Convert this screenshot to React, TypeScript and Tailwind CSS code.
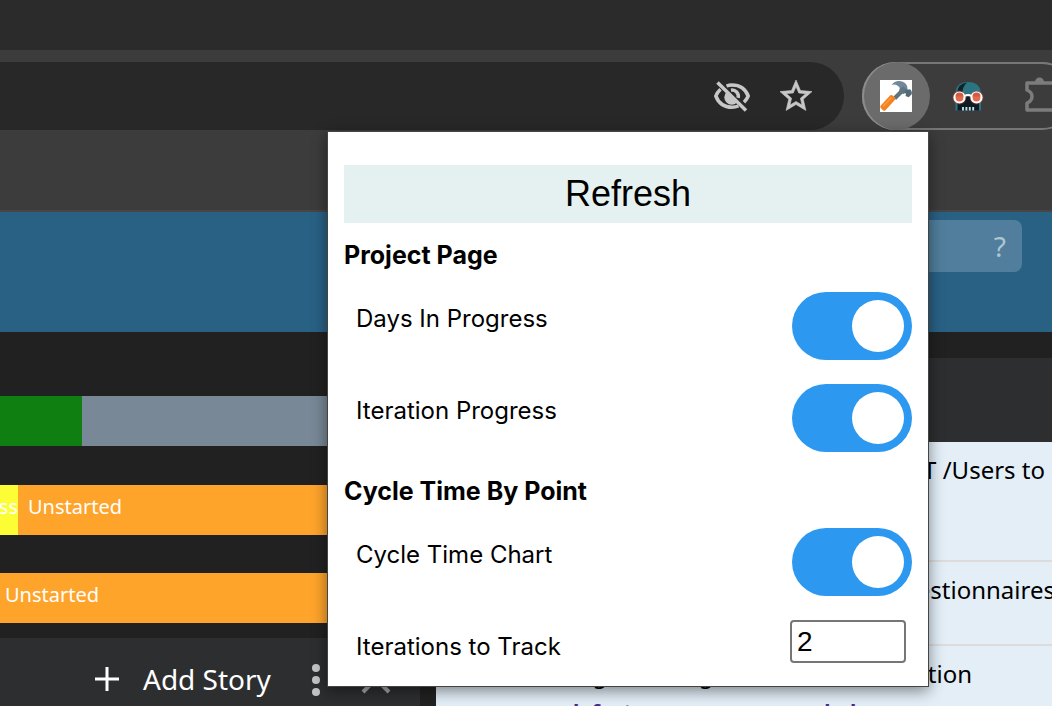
import React from "react";

function Toggle({ id, label }: { id: string; label: string }) {
  return (
    <div className="flex h-17 items-start justify-between pl-3">
      <label htmlFor={id} className="pt-[11px] text-2xl leading-8">
        {label}
      </label>
      <span className="relative block h-17 w-30">
        <input
          id={id}
          type="checkbox"
          role="switch"
          defaultChecked
          className="peer h-17 w-30 cursor-pointer appearance-none rounded-full bg-[#ccc] checked:bg-[#2c98f0]"
        />
        <span className="pointer-events-none absolute top-2 left-2 size-13 rounded-full bg-white peer-checked:left-15" />
      </span>
    </div>
  );
}

function Popup() {
  return (
    <section className="absolute top-[131px] right-[123px] z-10 w-[602px] border border-[#444] bg-white px-4 pt-[33px] pb-[23px] font-['Inter',sans-serif] text-black shadow-[0_4px_14px_rgba(0,0,0,0.45)]">
      <button className="h-[58px] w-full bg-[#e5f1f1] font-['Liberation_Sans',sans-serif] text-4xl leading-[58px]">
        Refresh
      </button>
      <h2 className="mt-4 mb-[21px] text-[25px] leading-8 font-bold">Project Page</h2>
      <div className="flex flex-col gap-6">
        <Toggle id="days" label="Days In Progress" />
        <Toggle id="iteration" label="Iteration Progress" />
      </div>
      <h2 className="mt-[23px] mb-[21px] text-[25px] leading-8 font-bold">Cycle Time By Point</h2>
      <Toggle id="chart" label="Cycle Time Chart" />
      <div className="mt-6 flex items-start justify-between pr-[6px] pl-3">
        <label htmlFor="track" className="pt-[11px] text-2xl leading-8">
          Iterations to Track
        </label>
        <input
          id="track"
          type="text"
          defaultValue="2"
          className="h-[43px] w-29 rounded border-2 border-[#767676] bg-white px-[5px] font-['Liberation_Sans',sans-serif] text-[28px] leading-[39px]"
        />
      </div>
    </section>
  );
}

function HammerIcon() {
  return (
    <svg viewBox="0 0 32 32" className="size-8">
      <rect width="32" height="32" fill="#fff" />
      <path d="M13.500 16.500 20.500 9.500 23.500 12.500 16 20Z" fill="#5d7380" />
      <path d="M.8 25.500 10.300 15.300Q11.500 14.500 12.700 15.500L15 17.800Q15.800 19 14.800 20L5.500 30.200Q4.300 31.300 3 30.200L.8 28Q-.3 26.800.8 25.500Z" fill="#f58220" />
      <path d="m3 26.500 8.500-9" stroke="#ff9d38" strokeWidth="1.500" />
      <path d="M11.500 4.800Q14.500.8 19.500 1 25 1.300 27.200 6.200L27.600 10 22.800 13 19 10.500 19.800 8Q17 3.300 11.500 4.800Z" fill="#71879a" />
      <path d="M20 9 23 6.500 27.600 9.500 24 14 20 13Z" fill="#607783" />
      <path d="m26 10 4-.8Q32.500 11 31.700 14.300L28.700 17.300 25.500 16 26 13.800 24 12.500Z" fill="#546b77" />
    </svg>
  );
}

function SkullIcon() {
  return (
    <svg viewBox="0 0 32 32" className="size-8">
      <path d="M3.500 30.500V14Q3.500 2 16 2T29 14V30.500Z" fill="#2b7482" />
      <path d="M5.500 13Q5 4 15 2.500 10 7 10.500 14Z" fill="#10232a" />
      <path d="M5.500 20 12 16.500H20.500L27 20V30.500H5.500Z" fill="#101b24" />
      <path d="M11 27v3.500m3.400-3.500v3.500m3.400-3.500v3.500m3.400-3.500v3.500" stroke="#b9e4e8" strokeWidth="1.900" />
      <circle cx="7.500" cy="17.500" r="7" fill="#e8593f" opacity="0.35" />
      <circle cx="24.500" cy="17.500" r="7" fill="#e8593f" opacity="0.35" />
      <circle cx="7.500" cy="17.500" r="5" fill="#e56a4f" stroke="#fff" strokeWidth="2.200" />
      <circle cx="24.500" cy="17.500" r="5" fill="#e56a4f" stroke="#fff" strokeWidth="2.200" />
      <path d="M3.500 16.500a4 4 0 0 1 8 0ZM20.500 16.500a4 4 0 0 1 8 0Z" fill="#cf5a45" />
      <path d="M12.500 16q3.500-2 7 0" stroke="#fff" strokeWidth="2" fill="none" />
    </svg>
  );
}

function BrowserChrome() {
  return (
    <header className="bg-[#3c3c3c]">
      <div className="h-[50px] bg-[#2b2b2b]" />
      <div className="flex h-20 items-center overflow-hidden pt-3">
        <div className="flex h-17 flex-1 items-center justify-end gap-[26px] rounded-r-full bg-[#282828] pr-[30px]">
          <button aria-label="Third-party cookies blocked">
            <svg viewBox="0 0 40 40" className="size-10" fill="none" stroke="#c7c7c7" strokeWidth="3.500">
              <path d="M14.500 10Q17 9 20 9C27.500 9 33.500 13 36.200 20Q34.700 23.700 32 26.300M26.500 30Q23.500 31.200 20 31.200C12.500 31.200 6.500 27 3.800 20Q5.200 16.300 8.500 13.200" />
              <path d="M19 14.200A6.300 6.300 0 0 1 26.200 21.800" />
              <path d="m5.500 6.500 28.500 28" />
              <path d="m14.500 16 10.500 10.500A7 7 0 0 1 14.500 16Z" fill="#c7c7c7" stroke="none" />
            </svg>
          </button>
          <button aria-label="Bookmark this page">
            <svg viewBox="2 2 20 20" className="m-0.5 size-8" fill="#c7c7c7">
              <path
                d="m22 9.240-7.190-.62L12 2 9.190 8.630 2 9.240l5.460 4.730L5.820 21 12 17.270 18.180 21l-1.630-7.030L22 9.240zM12 15.400l-3.760 2.270 1-4.280-3.320-2.880 4.380-.38L12 6.100l1.710 4.040 4.380.38-3.320 2.880 1 4.280L12 15.400z"
                stroke="#c7c7c7"
                strokeWidth="0.400"
              />
            </svg>
          </button>
        </div>
        <div className="-mr-6 ml-[18px] flex h-17 w-[214px] items-center rounded-full border-2 border-[#777]">
          <button aria-label="Story tools" className="-ml-0.5 flex size-17 shrink-0 items-center justify-center rounded-full bg-[#6b6b6b] shadow-[inset_2px_0_0_#8c8c8c]">
            <HammerIcon />
          </button>
          <button aria-label="Skull extension" className="ml-[22px]">
            <SkullIcon />
          </button>
          <button aria-label="Extensions" className="ml-[39px]">
            <svg viewBox="0 0 40 40" className="size-10" fill="none" stroke="#7c7c7c" strokeWidth="3.500">
              <path d="M4 7H32V34H4V27Q9 25 9 20.500T4 14Z" strokeLinejoin="round" />
              <path d="M12 6a4.500 4.500 0 0 1 9 0Z" fill="#7c7c7c" stroke="none" />
            </svg>
          </button>
        </div>
      </div>
      <div className="h-[82px] border-b-2 border-[#464646]" />
    </header>
  );
}

function LeftPanel() {
  return (
    <div className="flex w-[420px] shrink-0 flex-col text-xl leading-7 text-white">
      <div className="mt-16 flex h-[50px]">
        <div className="w-[82px] bg-[#107f11]" />
        <div className="flex-1 bg-[#788896]" />
      </div>
      <div className="mt-[39px] flex h-[50px] bg-[#ffa42b]">
        <div className="flex w-[18px] justify-end overflow-hidden bg-[#fdfd36] pt-2 whitespace-nowrap">In Progress</div>
        <div className="flex-1 pt-2 pl-[10px]">Unstarted</div>
      </div>
      <div className="mt-[38px] h-[50px] bg-[#ffa42b] pt-2 pl-[5px]">Unstarted</div>
      <div className="mt-[15px] flex flex-1 items-start bg-[#2d2e30] pt-[21px] pl-[95px]">
        <button className="flex items-center gap-6 text-[28px] leading-10">
          <svg viewBox="0 0 24 24" className="size-6" stroke="#fff" strokeWidth="3">
            <path d="M12 0V24M0 12H24" />
          </svg>
          Add Story
        </button>
        <button aria-label="More" className="ml-10 pt-[5px]">
          <svg viewBox="0 0 10 32" className="h-8 w-[10px]" fill="#c4c4c4">
            <circle cx="5" cy="4" r="4" />
            <circle cx="5" cy="16" r="4" />
            <circle cx="5" cy="28" r="4" />
          </svg>
        </button>
        <button aria-label="Close" className="ml-10 pt-[5px]">
          <svg viewBox="0 0 30 30" className="size-[30px]" stroke="#a8a8a8" strokeWidth="4">
            <path d="m2 2 26 26M28 2 2 28" />
          </svg>
        </button>
      </div>
    </div>
  );
}

function StoryList() {
  return (
    <div className="ml-4 flex min-w-0 flex-1 flex-col pt-[26px]">
      <div className="h-[84px] shrink-0 bg-[#2d2e30]" />
      <ul className="bg-[#e3eef7] text-2xl leading-8 whitespace-nowrap text-black">
        <li className="h-30 border-b-2 border-[#dcdcdc] pt-3 pr-[7px] text-right">Send GET /Users to</li>
        <li className="flex h-21 justify-end border-b-2 border-[#dcdcdc] pt-3">
          <span className="-mr-[3px]">Questionnaires</span>
        </li>
        <li className="pt-3 pb-6">
          <div className="pr-20 text-right">Missing checking record documentation</div>
          <div className="mt-2 pl-[130px] text-[21px] leading-7 font-bold text-[#4b2a8c]">defect, server-access scaled</div>
        </li>
      </ul>
    </div>
  );
}

export default function App() {
  return (
    <div className="relative flex h-screen flex-col overflow-hidden bg-[#212121] font-['Noto_Sans',sans-serif]">
      <BrowserChrome />
      <div className="flex h-30 shrink-0 items-start justify-end bg-[#296185] pt-2 pr-[30px]">
        <div className="flex h-[52px] w-[220px] items-center justify-end rounded-lg bg-[#507e9c] pr-4 text-[28px] text-[#b0c5d2]">
          <button aria-label="Search help">?</button>
        </div>
      </div>
      <main className="flex min-h-0 flex-1">
        <LeftPanel />
        <StoryList />
      </main>
      <Popup />
    </div>
  );
}
